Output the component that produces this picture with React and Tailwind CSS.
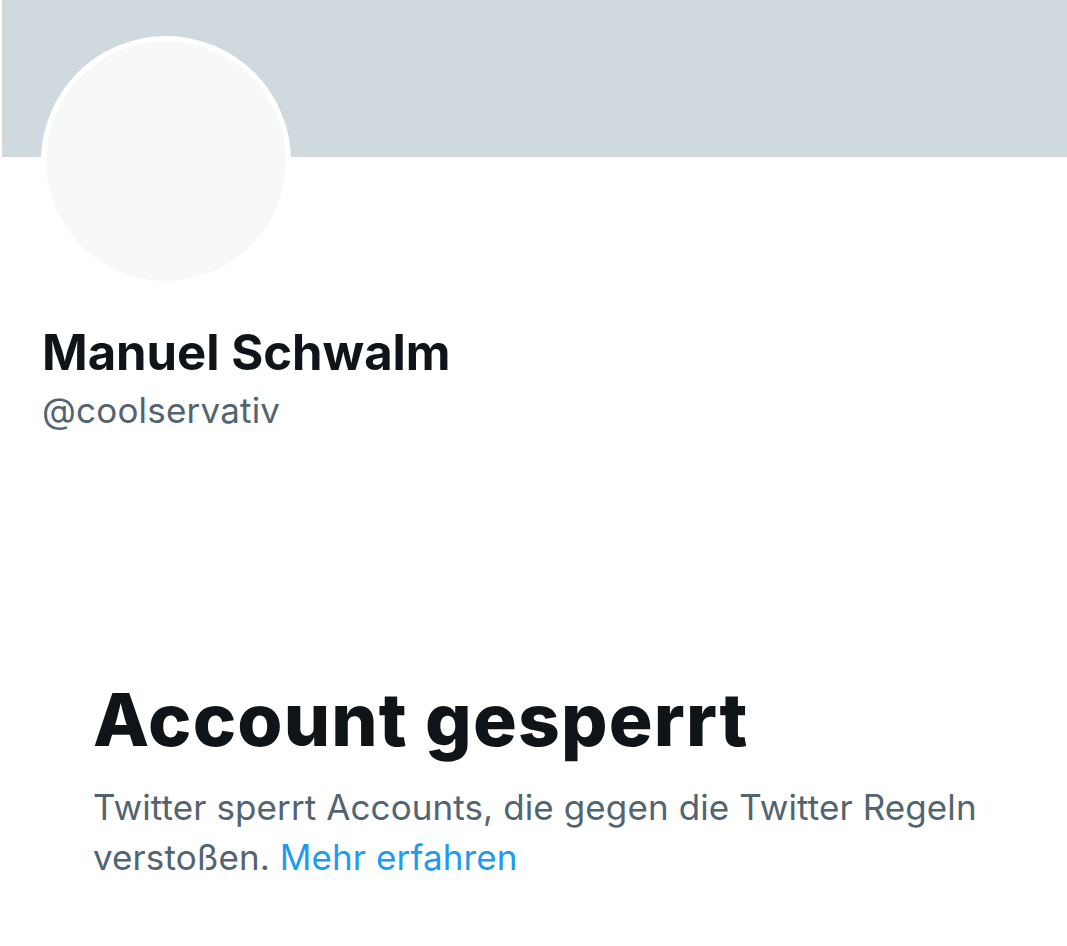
import React from 'react';

const App = () => {
  return (
    <div className="w-[1067px] h-[946px] bg-white overflow-hidden" style={{ fontFamily: 'Inter, "Noto Sans", sans-serif' }}>
      {/* Banner */}
      <div className="ml-[2px] h-[157px] bg-[#cfd9de]"></div>

      {/* Avatar */}
      <div className="ml-[41px] -mt-[121px] w-[250px] h-[250px] rounded-full bg-white p-[5px]">
        <div className="w-full h-full rounded-full bg-[#f7f9f9]"></div>
      </div>

      {/* Name + handle */}
      <div className="ml-[42px] mt-[37px]">
        <div className="text-[49px] leading-[60px] font-bold text-[#0f1419]">
          Manuel Schwalm
        </div>
        <div className="mt-[4px] text-[35px] leading-[46px] text-[#536471] tracking-[0.2px]">
          @coolservativ
        </div>
      </div>

      {/* Suspended notice */}
      <div className="ml-[93px] mt-[245px] w-[920px]">
        <h1 className="text-[73px] leading-[84px] font-extrabold text-[#0f1419] tracking-[1.2px]">
          Account gesperrt
        </h1>
        <p className="mt-[20px] text-[35px] leading-[50px] text-[#536471] tracking-[0.1px]">
          Twitter sperrt Accounts, die gegen die Twitter Regeln verstoßen.{' '}
          <a href="#" className="text-[#1d9bf0]">Mehr erfahren</a>
        </p>
      </div>
    </div>
  );
};

export default App;
